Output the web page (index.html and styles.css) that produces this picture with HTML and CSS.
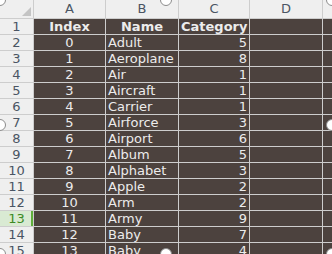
FILE: index.html
```html
<!DOCTYPE html>
<html lang="en">
<head>
    <meta charset="UTF-8">
    <title>sheet</title>
    <link rel="stylesheet" href="styles.css">
</head>
<body>
    <div class="frame">
        <div class="sheet">
            <div class="hd corner"><span class="tri"></span></div>
            <div class="hd">A</div>
            <div class="hd">B</div>
            <div class="hd">C</div>
            <div class="hd">D</div>
            <div class="hd"></div>

            <div class="rn">1</div>
            <div class="c mid b">Index</div>
            <div class="c mid b">Name</div>
            <div class="c mid b">Category</div>
            <div class="c"></div>
            <div class="c"></div>

            <div class="rn">2</div>
            <div class="c mid">0</div>
            <div class="c">Adult</div>
            <div class="c num">5</div>
            <div class="c"></div>
            <div class="c"></div>

            <div class="rn">3</div>
            <div class="c mid">1</div>
            <div class="c">Aeroplane</div>
            <div class="c num">8</div>
            <div class="c"></div>
            <div class="c"></div>

            <div class="rn">4</div>
            <div class="c mid">2</div>
            <div class="c">Air</div>
            <div class="c num">1</div>
            <div class="c"></div>
            <div class="c"></div>

            <div class="rn">5</div>
            <div class="c mid">3</div>
            <div class="c">Aircraft</div>
            <div class="c num">1</div>
            <div class="c"></div>
            <div class="c"></div>

            <div class="rn">6</div>
            <div class="c mid">4</div>
            <div class="c">Carrier</div>
            <div class="c num">1</div>
            <div class="c"></div>
            <div class="c"></div>

            <div class="rn">7</div>
            <div class="c mid">5</div>
            <div class="c">Airforce</div>
            <div class="c num">3</div>
            <div class="c"></div>
            <div class="c"></div>

            <div class="rn">8</div>
            <div class="c mid">6</div>
            <div class="c">Airport</div>
            <div class="c num">6</div>
            <div class="c"></div>
            <div class="c"></div>

            <div class="rn">9</div>
            <div class="c mid">7</div>
            <div class="c">Album</div>
            <div class="c num">5</div>
            <div class="c"></div>
            <div class="c"></div>

            <div class="rn">10</div>
            <div class="c mid">8</div>
            <div class="c">Alphabet</div>
            <div class="c num">3</div>
            <div class="c"></div>
            <div class="c"></div>

            <div class="rn">11</div>
            <div class="c mid">9</div>
            <div class="c">Apple</div>
            <div class="c num">2</div>
            <div class="c"></div>
            <div class="c"></div>

            <div class="rn">12</div>
            <div class="c mid">10</div>
            <div class="c">Arm</div>
            <div class="c num">2</div>
            <div class="c"></div>
            <div class="c"></div>

            <div class="rn sel">13</div>
            <div class="c mid">11</div>
            <div class="c">Army</div>
            <div class="c num">9</div>
            <div class="c"></div>
            <div class="c"></div>

            <div class="rn">14</div>
            <div class="c mid">12</div>
            <div class="c">Baby</div>
            <div class="c num">7</div>
            <div class="c"></div>
            <div class="c"></div>

            <div class="rn">15</div>
            <div class="c mid">13</div>
            <div class="c">Baby</div>
            <div class="c num">4</div>
            <div class="c"></div>
            <div class="c"></div>
        </div>

        <!-- resize handles -->
        <span class="knob k-tl"></span>
        <span class="knob k-tm"></span>
        <span class="knob k-tr"></span>
        <span class="knob k-ml"></span>
        <span class="knob k-mr"></span>
        <span class="knob k-bl"></span>
        <span class="knob k-bm"></span>
        <span class="knob k-br"></span>
    </div>
</body>
</html>
```

FILE: styles.css
```css
html, body{
    margin:0;
    padding:0;
    overflow:hidden;
    background:#fff;
}
.frame{
    position:relative;
    width:332px;
    height:254px;
    overflow:hidden;
}
.sheet{
    display:grid;
    grid-template-columns:33px 71px 72px 70px 72px 1fr;
    grid-auto-rows:15px;
    grid-template-rows:18px;
    gap:1px;
    background:#cdcdcd;
    font-family:"DejaVu Sans", sans-serif;
    font-size:13px;
    line-height:15px;
}
.hd{
    position:relative;
    background:#efefef;
    color:#4a5563;
    text-align:center;
    line-height:18px;
}
.corner .tri{
    position:absolute;
    right:2px;
    bottom:2px;
    width:0;
    height:0;
    border-left:9px solid transparent;
    border-bottom:9px solid #c4c4c4;
}
.rn{
    background:#efefef;
    color:#4a5563;
    text-align:center;
}
.rn.sel{
    background:#d9ead3;
    color:#3d8a25;
    box-shadow:inset -2px 0 0 #5fae3c;
}
.c{
    background:#4c423e;
    color:#ececec;
    padding:0 2px;
    white-space:nowrap;
    overflow:hidden;
}
.mid{
    text-align:center;
}
.num{
    text-align:right;
}
.b{
    font-weight:bold;
}
.knob{
    position:absolute;
    width:10px;
    height:10px;
    border-radius:50%;
    background:#fff;
    border:1px solid #8c8c8c;
    margin:-6px 0 0 -6px;
}
.k-tl{ left:0; top:0; }
.k-tm{ left:166px; top:0; }
.k-tr{ left:332px; top:0; }
.k-ml{ left:0; top:125px; }
.k-mr{ left:332px; top:125px; }
.k-bl{ left:0; top:254px; }
.k-bm{ left:166px; top:254px; }
.k-br{ left:332px; top:254px; }
```
